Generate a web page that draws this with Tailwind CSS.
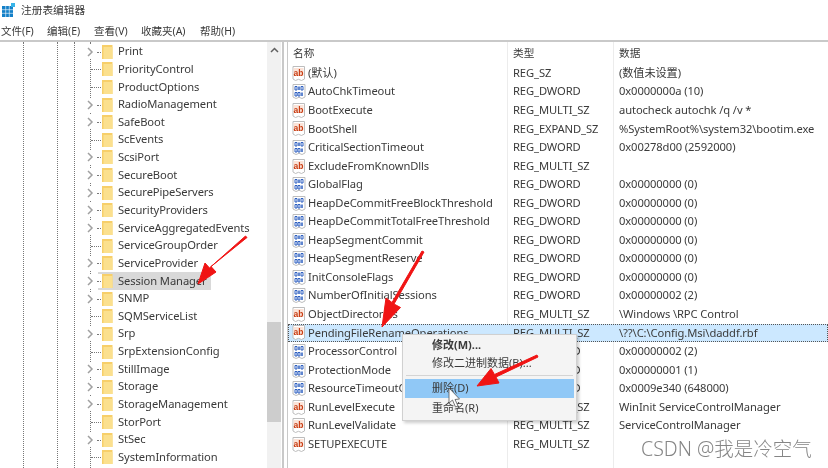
<!DOCTYPE html>
<html lang="zh-CN">
  <head>
    <meta charset="UTF-8" />
    <title>注册表编辑器</title>
    <script src="https://cdn.jsdelivr.net/npm/@tailwindcss/browser@4"></script>
  </head>
  <body class="bg-white">
    <div class="relative w-[828px] h-[468px] overflow-hidden bg-white text-[#3a3a3a] text-[11.2px] tracking-[-0.1px] font-['Noto_Sans','Noto_Sans_CJK_SC',sans-serif] blur-[0.35px]">
      <!-- title bar -->
      <div class="h-[20px] flex items-center pl-[2px] gap-[6px]">
        <svg width="13" height="14" viewBox="0 0 13 14">
          <rect x="0" y="3" width="11" height="11" fill="#1480c8" />
          <path d="M3.7 3v11M7.3 3v11M0 6.7h11M0 10.3h11" stroke="#fff" stroke-width="0.6" />
          <rect x="9" y="0" width="4" height="4" fill="#38b4e8" />
        </svg>
        <span class="text-[10.7px] tracking-normal leading-none">注册表编辑器</span>
      </div>
      <!-- menu -->
      <div class="h-[20px] pt-[3px] flex items-center pl-[1px] gap-[13px] text-[10.5px] tracking-normal leading-none">
        <span class="w-[33px]">文件(F)</span>
        <span class="w-[34px]">编辑(E)</span>
        <span class="w-[34px]">查看(V)</span>
        <span class="w-[46px]">收藏夹(A)</span>
        <span>帮助(H)</span>
      </div>
      <div class="flex h-[428px] border-t-[2px] border-[#c9c9c9]">
        <!-- tree -->
        <div class="relative w-[284px] border-r-[2px] border-[#c9c9c9] overflow-hidden">
          <div class="absolute left-[23px] top-0 bottom-0 border-l border-dotted border-[#777]"></div>
          <div class="absolute left-[57px] top-0 bottom-0 border-l border-dotted border-[#777]"></div>
          <div class="absolute left-[74px] top-0 bottom-0 border-l border-dotted border-[#777]"></div>
          <div class="absolute left-[90px] top-0 bottom-0 border-l border-dotted border-[#777]"></div>
          <div id="tree" class="relative pt-[0.8px]"></div>
          <!-- scrollbar -->
          <div class="absolute right-[1px] top-0 bottom-0 w-[14px] bg-[#f1f1f1]">
            <svg class="mt-[5px] ml-[3px]" width="9" height="6" viewBox="0 0 9 6"><path d="M1 5l3.5-3.5L8 5" fill="none" stroke="#606060" stroke-width="1.5" /></svg>
            <div class="absolute left-0 right-0 top-[280px] h-[100px] bg-[#cdcdcd]"></div>
          </div>
        </div>
        <div class="w-[3px]"></div>
        <!-- list -->
        <div class="relative flex-1 border-l-[1px] border-[#c9c9c9] overflow-hidden">
          <div class="absolute left-[219px] top-0 bottom-0 border-l border-[#ececec]"></div>
          <div class="absolute left-[325px] top-0 bottom-0 border-l border-[#ececec]"></div>
          <div class="h-[22px] flex items-center text-[10.7px] tracking-normal">
            <span class="w-[219px] pl-[5px]">名称</span>
            <span class="w-[106px] pl-[6px]">类型</span>
            <span class="pl-[6px]">数据</span>
          </div>
          <div id="rows" class="relative"></div>
        </div>
      </div>

      <!-- context menu -->
      <div class="absolute left-[402px] top-[334px] w-[175px] h-[87px] bg-[#f4f4f4] border border-[#d0d0d0] shadow-[2px_2px_3px_rgba(0,0,0,0.2)] text-[11px] tracking-normal pt-[1px] px-[2px]">
        <div class="h-[18px] pl-[27px] flex items-center font-bold">修改(M)...</div>
        <div class="h-[18px] pl-[27px] flex items-center">修改二进制数据(B)...</div>
        <div class="h-[7px] mx-[1px] flex items-center"><div class="w-full border-t border-[#d4d4d4]"></div></div>
        <div class="h-[19px] pl-[27px] flex items-center bg-[#90c8f6]">删除(D)</div>
        <div class="h-[20px] pl-[27px] flex items-center">重命名(R)</div>
      </div>

      <!-- red arrows and cursor drawn on top -->
      <svg class="absolute left-0 top-0" width="828" height="468" viewBox="0 0 828 468">
        <path d="M247 237.500L211 266.500L216 272L198 284L205 263L209.500 268L245.500 236Z" fill="#f01414" stroke="#f01414" stroke-width="1" />
        <path d="M424 252L394 304L400.500 307.500L382 327L386 298L392 302.500L422 251Z" fill="#f01414" stroke="#f01414" stroke-width="1" />
        <path d="M538 357L496 377L499 383L477 386L491 368.500L494.500 374.500L537 355Z" fill="#f01414" stroke="#f01414" stroke-width="1" />
        <path d="M449 388V403L452.500 400L455.500 407L458 406L455 399.500L459.500 399Z" fill="#fff" stroke="#555" stroke-width="0.8" />
      </svg>

      <!-- watermark -->
      <div class="absolute left-[641px] top-[437px] text-[19.5px] leading-[24px] text-[#858585] tracking-normal font-light drop-shadow-[0_0_1px_rgba(255,255,255,0.9)]">CSDN @我是冷空气</div>
    </div>

    <script>
      const folder = `<svg class="shrink-0" width="11" height="14" viewBox="0 0 11 14"><path d="M0 0h10.500v14H0z" fill="#f7cf6a"/><path d="M1.500 2h9v12h-9z" fill="#fbe08e"/></svg>`;
      const chevron = `<span class="relative w-[17px] h-[14px] bg-white flex items-center shrink-0"><svg class="ml-[2px]" width="7" height="10" viewBox="0 0 7 10"><path d="M1 1l4 4-4 4" fill="none" stroke="#a0a0a0" stroke-width="1.5"/></svg><span class="absolute left-[12px] top-[7px] w-[4px] border-t border-dotted border-[#777]"></span></span>`;
      const leaf = `<span class="relative w-[17px] h-[14px] shrink-0"><span class="absolute left-[6px] top-[7px] w-[10px] border-t border-dotted border-[#777]"></span></span>`;

      const tree = [
        ["Print", 1], ["PriorityControl", 0], ["ProductOptions", 0], ["RadioManagement", 1],
        ["SafeBoot", 1], ["ScEvents", 0], ["ScsiPort", 1], ["SecureBoot", 1],
        ["SecurePipeServers", 1], ["SecurityProviders", 1], ["ServiceAggregatedEvents", 1], ["ServiceGroupOrder", 0],
        ["ServiceProvider", 1], ["Session Manager", 1], ["SNMP", 1], ["SQMServiceList", 0],
        ["Srp", 1], ["SrpExtensionConfig", 0], ["StillImage", 1], ["Storage", 1],
        ["StorageManagement", 1], ["StorPort", 0], ["StSec", 1], ["SystemInformation", 0],
      ];
      document.getElementById("tree").innerHTML = tree.map(([name, more]) => {
        const label = name === "Session Manager"
          ? `<span class="absolute left-[98px] w-[113px] top-0 bottom-0 bg-[#d9d9d9]"></span>`
          : "";
        return `<div class="relative h-[17.65px] pl-[85px] flex items-center">${label}${more ? chevron : leaf}<span class="relative flex items-center">${folder}<span class="ml-[5px] whitespace-nowrap">${name}</span></span></div>`;
      }).join("");

      const ab = `<svg class="shrink-0" width="14" height="15" viewBox="0 0 14 15"><path d="M1 .5h11.500v12.500l-3 1.500-3-1.200-3 1.200L1 13z" fill="#fff" stroke="#bdbdbd"/><rect x="1.500" y="2" width="10" height="8" fill="#fbe3d8"/><text x="1.500" y="9.500" font-size="8.500" font-weight="700" font-family="Liberation Sans" fill="#c83c12">ab</text></svg>`;
      const bin = `<svg class="shrink-0" width="14" height="15" viewBox="0 0 14 15"><path d="M1 .5h12v12.500l-3 1.500-3-1.200-3 1.200L1 13z" fill="#fff" stroke="#bdbdbd"/><path d="M3 2.500h2v3.500H3zM9 2.500h2v3.500H9zM3 8.500h2V12H3zM6 8.500h2V12H6z" fill="none" stroke="#2c5fc0"/><path d="M7 2.500v3.500M10 8.500V12" stroke="#2c5fc0" stroke-width="1.500"/></svg>`;

      const D = "REG_DWORD", M = "REG_MULTI_SZ";
      const rows = [
        [ab, "(默认)", "REG_SZ", "(数值未设置)"],
        [bin, "AutoChkTimeout", D, "0x0000000a (10)"],
        [ab, "BootExecute", M, "autocheck autochk /q /v *"],
        [ab, "BootShell", "REG_EXPAND_SZ", "%SystemRoot%\\system32\\bootim.exe"],
        [bin, "CriticalSectionTimeout", D, "0x00278d00 (2592000)"],
        [ab, "ExcludeFromKnownDlls", M, ""],
        [bin, "GlobalFlag", D, "0x00000000 (0)"],
        [bin, "HeapDeCommitFreeBlockThreshold", D, "0x00000000 (0)"],
        [bin, "HeapDeCommitTotalFreeThreshold", D, "0x00000000 (0)"],
        [bin, "HeapSegmentCommit", D, "0x00000000 (0)"],
        [bin, "HeapSegmentReserve", D, "0x00000000 (0)"],
        [bin, "InitConsoleFlags", D, "0x00000000 (0)"],
        [bin, "NumberOfInitialSessions", D, "0x00000002 (2)"],
        [ab, "ObjectDirectories", M, "\\Windows \\RPC Control"],
        [ab, "PendingFileRenameOperations", M, "\\??\\C:\\Config.Msi\\daddf.rbf"],
        [bin, "ProcessorControl", D, "0x00000002 (2)"],
        [bin, "ProtectionMode", D, "0x00000001 (1)"],
        [bin, "ResourceTimeoutCount", D, "0x0009e340 (648000)"],
        [ab, "RunLevelExecute", M, "WinInit ServiceControlManager"],
        [ab, "RunLevelValidate", M, "ServiceControlManager"],
        [ab, "SETUPEXECUTE", M, ""],
      ];
      document.getElementById("rows").innerHTML = rows.map(([icon, name, type, data], i) => {
        const on = i === 14 ? "bg-[#cce8ff] outline outline-dotted outline-[#555] -outline-offset-1" : "";
        return `<div class="h-[18.55px] flex items-center whitespace-nowrap ${on}"><span class="w-[219px] pl-[4px] flex items-center gap-[2px]">${icon}<span>${name}</span></span><span class="w-[106px] pl-[6px]">${type}</span><span class="pl-[6px]">${data}</span></div>`;
      }).join("");
    </script>
  </body>
</html>
